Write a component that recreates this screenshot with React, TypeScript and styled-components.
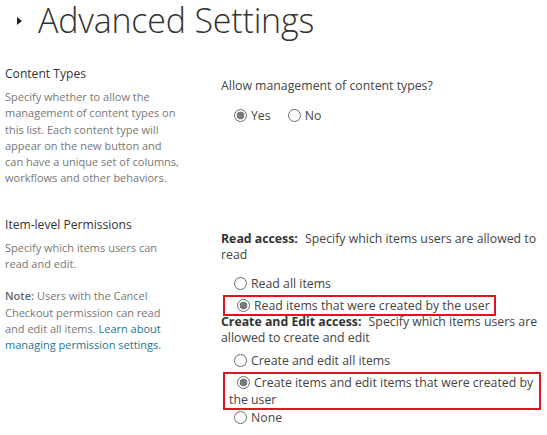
import styled, { createGlobalStyle } from "styled-components";

const GlobalStyle = createGlobalStyle`
  body {
    margin: 0;
    background: #fff;
    font-family: "Open Sans", "Segoe UI", "Liberation Sans", sans-serif;
    color: #444;
  }
`;

const Page = styled.div`
  width: 547px;
  height: 435px;
  overflow: hidden;
`;

const TitleRow = styled.div`
  display: flex;
  align-items: center;
  height: 40px;
  padding-left: 17px;
  gap: 16px;
`;

const Caret = styled.span`
  width: 0;
  height: 0;
  border-top: 4px solid transparent;
  border-bottom: 4px solid transparent;
  border-left: 5px solid #222;
  margin-top: 1px;
`;

const Title = styled.h1`
  margin: 0;
  font-weight: 300;
  font-size: 34px;
  line-height: 40px;
  color: #333;
  letter-spacing: -0.2px;
`;

const Section = styled.div<{ $top: number }>`
  display: grid;
  grid-template-columns: 221px 1fr;
  padding-top: ${(p) => p.$top}px;
`;

const Info = styled.div`
  padding-left: 5px;
  width: 176.5px;
`;

const InfoHeading = styled.h3`
  margin: 0 0 6px;
  font-size: 12.1px;
  font-weight: 400;
  line-height: 18px;
  color: #333;
`;

const InfoText = styled.p`
  margin: 0 0 16px;
  font-size: 11px;
  line-height: 16.3px;
  color: #777;

  b {
    font-weight: 600;
    color: #666;
  }

  a {
    color: #1e7590;
    text-decoration: none;
  }
`;

const Controls = styled.div<{ $offset: number }>`
  padding-top: ${(p) => p.$offset}px;
  padding-right: 6px;
  font-size: 12.3px;
  color: #444;
`;

const Question = styled.p`
  margin: 0;
  line-height: 17px;
`;

const Inline = styled.div`
  display: flex;
  gap: 17px;
  padding-left: 13px;
  margin-top: 12px;
  line-height: 19px;
`;

const Strong = styled.b`
  font-weight: 700;
  color: #333;
  margin-right: 4px;
`;

const OptionList = styled.div<{ $gap: number }>`
  margin-top: ${(p) => p.$gap}px;
  line-height: 19px;
`;

const Option = styled.div<{ $marked?: boolean }>`
  margin: ${(p) => (p.$marked ? "2px 0 -2px 2px" : "0")};
  padding-left: ${(p) => (p.$marked ? 4 : 13)}px;
  padding-right: ${(p) => (p.$marked ? 4 : 0)}px;
  border: ${(p) => (p.$marked ? "2px solid #e3141f" : "none")};
  width: ${(p) => (p.$marked ? "fit-content" : "auto")};
  line-height: ${(p) => (p.$marked ? 17 : 19)}px;
`;

const Indent = styled.span`
  padding-left: 8px;
`;

const RadioDot = styled.span<{ $checked?: boolean }>`
  display: inline-block;
  box-sizing: border-box;
  width: 13px;
  height: 13px;
  margin-right: 4px;
  border: 1px solid #6b6b6b;
  border-radius: 50%;
  vertical-align: -2px;
  background: ${(p) =>
    p.$checked
      ? "radial-gradient(circle, #7a7a7a 0 3.6px, #fff 4.2px)"
      : "#fff"};
`;

const Choice = styled.span`
  white-space: nowrap;
`;

const SubBlock = styled.div`
  line-height: 16.5px;
`;

export default function App() {
  return (
    <Page>
      <GlobalStyle />
      <TitleRow>
        <Caret />
        <Title>Advanced Settings</Title>
      </TitleRow>

      <Section $top={25}>
        <Info>
          <InfoHeading>Content Types</InfoHeading>
          <InfoText>
            Specify whether to allow the management of content types on this
            list. Each content type will appear on the new button and
            <br />
            can have a unique set of columns, workflows and other behaviors.
          </InfoText>
        </Info>
        <Controls $offset={12}>
          <Question>Allow management of content types?</Question>
          <Inline>
            <Choice>
              <RadioDot $checked />
              Yes
            </Choice>
            <Choice>
              <RadioDot />
              No
            </Choice>
          </Inline>
        </Controls>
      </Section>

      <Section $top={13}>
        <Info>
          <InfoHeading>Item-level Permissions</InfoHeading>
          <InfoText>Specify which items users can read and edit.</InfoText>
          <InfoText>
            <b>Note:</b> Users with the Cancel Checkout permission can read and
            edit all items. <a href="#">Learn about managing permission settings.</a>
          </InfoText>
        </Info>
        <Controls $offset={15}>
          <SubBlock>
            <Strong>Read access:</Strong> Specify which items users are allowed
            to read
          </SubBlock>
          <OptionList $gap={10}>
            <Option>
              <RadioDot />
              Read all items
            </Option>
            <Option $marked>
              <Indent>
                <RadioDot $checked />
              </Indent>
              Read items that were created by the user
            </Option>
          </OptionList>
          <SubBlock>
            <Strong>Create and Edit access:</Strong> Specify which items users
            are allowed to create and edit
          </SubBlock>
          <OptionList $gap={4}>
            <Option>
              <RadioDot />
              Create and edit all items
            </Option>
            <Option $marked>
              <Indent>
                <RadioDot $checked />
              </Indent>
              Create items and edit items that were created by the user
            </Option>
            <Option>
              <RadioDot />
              None
            </Option>
          </OptionList>
        </Controls>
      </Section>
    </Page>
  );
}
